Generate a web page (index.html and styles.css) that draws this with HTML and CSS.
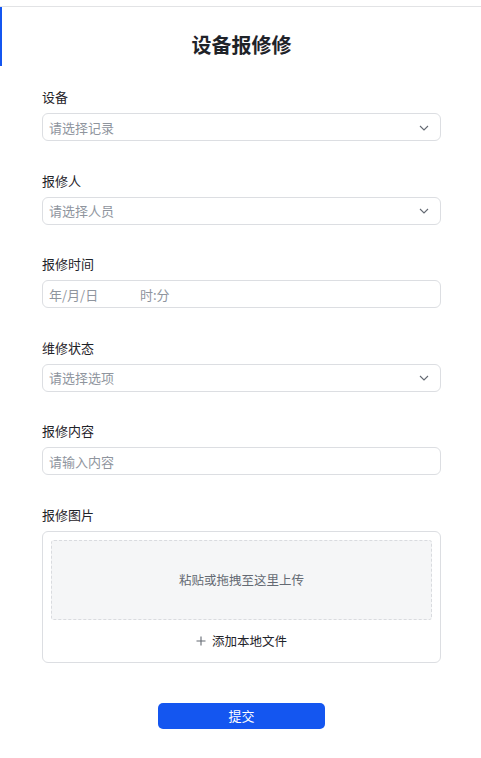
FILE: index.html
```html
<!DOCTYPE html>
<html lang="zh">
<head>
<meta charset="utf-8">
<link rel="stylesheet" href="styles.css">
</head>
<body>
<div class="topbar"></div>
<div class="header"><h1 class="title">设备报修修</h1></div>
<form class="form">
  <div class="field">
    <div class="label">设备</div>
    <div class="input select"><span class="ph">请选择记录</span>
      <svg class="chev" width="10" height="6" viewBox="0 0 10 6"><path d="M1 1l4 4 4-4" fill="none" stroke="#646a73" stroke-width="1.1"/></svg>
    </div>
  </div>
  <div class="field">
    <div class="label">报修人</div>
    <div class="input select"><span class="ph">请选择人员</span>
      <svg class="chev" width="10" height="6" viewBox="0 0 10 6"><path d="M1 1l4 4 4-4" fill="none" stroke="#646a73" stroke-width="1.1"/></svg>
    </div>
  </div>
  <div class="field">
    <div class="label">报修时间</div>
    <div class="input"><span class="ph date">年/月/日</span><span class="ph">时:分</span></div>
  </div>
  <div class="field">
    <div class="label">维修状态</div>
    <div class="input select"><span class="ph">请选择选项</span>
      <svg class="chev" width="10" height="6" viewBox="0 0 10 6"><path d="M1 1l4 4 4-4" fill="none" stroke="#646a73" stroke-width="1.1"/></svg>
    </div>
  </div>
  <div class="field">
    <div class="label">报修内容</div>
    <div class="input"><span class="ph">请输入内容</span></div>
  </div>
  <div class="field">
    <div class="label">报修图片</div>
    <div class="upload">
      <div class="drop">粘贴或拖拽至这里上传</div>
      <div class="add">
        <svg width="10" height="10" viewBox="0 0 10 10"><path d="M5 0.5v9M0.5 5h9" stroke="#646a73" stroke-width="1.1" fill="none"/></svg>
        <span>添加本地文件</span>
      </div>
    </div>
  </div>
  <div class="actions"><button type="button" class="submit">提交</button></div>
</form>
</body>
</html>
```
FILE: styles.css
```css
* { box-sizing: border-box; }
html, body { margin: 0; padding: 0; background: #fff; }
body {
  font-family: "Noto Sans CJK SC", "Noto Sans", sans-serif;
  color: #1f2329;
  width: 481px;
}
.topbar {
  height: 7px;
  border-bottom: 1px solid #e2e3e5;
}
.header {
  height: 59px;
  border-left: 2px solid #1456f0;
  padding-top: 26px;
}
.title {
  margin: 0;
  text-align: center;
  font-size: 20px;
  line-height: 24px;
  font-weight: 700;
  color: #1f2329;
}
.form {
  padding: 22px 40px 0 42px;
  display: flex;
  flex-direction: column;
  gap: 30.6px;
}
.field {
  display: flex;
  flex-direction: column;
  gap: 8px;
}
.label {
  font-size: 13px;
  line-height: 17px;
  color: #1f2329;
}
.input {
  height: 28px;
  border: 1px solid #dcdee2;
  border-radius: 6px;
  display: flex;
  align-items: center;
  padding: 0 11px 0 6px;
  font-size: 13px;
}
.ph { color: #8f959e; }
.date { width: 91px; }
.select { justify-content: space-between; }
.chev { display: block; margin-top: 1px; }
.upload {
  height: 132px;
  border: 1px solid #dcdee2;
  border-radius: 6px;
  padding: 8px 8px 0 8px;
  display: flex;
  flex-direction: column;
}
.drop {
  height: 80px;
  border: 1px dashed #d9dbdf;
  border-radius: 3px;
  background: #f5f6f7;
  display: flex;
  align-items: center;
  justify-content: center;
  font-size: 12.5px;
  color: #646a73;
}
.add {
  height: 42px;
  display: flex;
  align-items: center;
  justify-content: center;
  gap: 6px;
  font-size: 12.5px;
  color: #1f2329;
}
.add svg { display: block; }
.actions {
  display: flex;
  justify-content: center;
  margin-top: 9.4px;
}
.submit {
  width: 167px;
  height: 26px;
  border: none;
  border-radius: 5px;
  background: #1456f0;
  color: #fff;
  font-family: inherit;
  font-size: 13px;
  padding: 0;
}
```
